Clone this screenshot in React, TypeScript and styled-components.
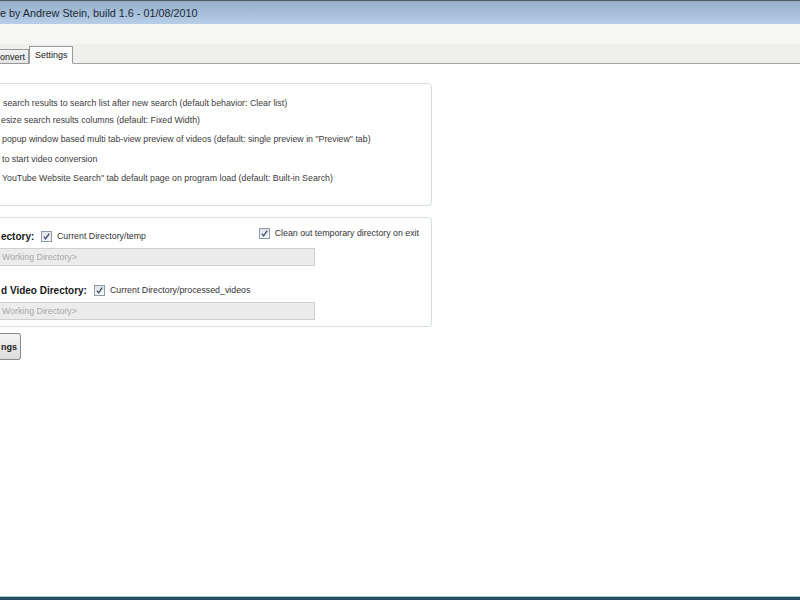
import React from "react";
import styled, { createGlobalStyle } from "styled-components";

const Global = createGlobalStyle`
  html, body { margin: 0; padding: 0; background: #fff; }
  body { width: 800px; height: 600px; overflow: hidden; }
`;

const Window = styled.div`
  width: 800px;
  height: 600px;
  display: flex;
  flex-direction: column;
  overflow: hidden;
  font-family: "Liberation Sans", "DejaVu Sans", sans-serif;
  background: #fff;
`;

const TitleBar = styled.div`
  height: 23px;
  border-top: 1px solid #4d5b66;
  background: linear-gradient(#96aec8, #a9c2dc 60%, #b7cfe8);
  display: flex;
  align-items: center;
  font-size: 10.8px;
  color: #1e2a36;
  white-space: nowrap;
`;

const MenuArea = styled.div`
  height: 20px;
  background: #f6f7f5;
`;

const TabStrip = styled.div`
  height: 19px;
  background: #efefed;
  border-bottom: 1px solid #a3a3a3;
  display: flex;
  align-items: flex-end;
`;

const Tab = styled.div<{ $active?: boolean }>`
  font-size: 9px;
  color: #222;
  padding: 0 4px;
  height: ${(p) => (p.$active ? 18 : 15)}px;
  line-height: ${(p) => (p.$active ? 16 : 15)}px;
  margin-bottom: -1px;
  background: ${(p) => (p.$active ? "#fcfcfc" : "linear-gradient(#f2f2f2,#e4e4e4)")};
  border: 1px solid #999;
  border-bottom: ${(p) => (p.$active ? "1px solid #fcfcfc" : "1px solid #999")};
  border-left: ${(p) => (p.$active ? "1px solid #999" : "none")};
  box-sizing: border-box;
  white-space: nowrap;
`;

const FirstTab = styled(Tab)`
  padding-left: 0;
  width: 29px;
`;

const SecondTab = styled(Tab)`
  width: 44px;
  padding-left: 5px;
`;

const Content = styled.div`
  flex: 1;
  display: flex;
  flex-direction: column;
  padding-top: 19px;
  gap: 11px;
`;

const Group = styled.div`
  width: 442px;
  margin-left: -10px;
  box-sizing: border-box;
  border: 1px solid #d6dde2;
  border-radius: 4px;
  background: #fff;
`;

const OptionsGroup = styled(Group)`
  height: 123px;
  padding: 13px 0 0 10px;
  display: flex;
  flex-direction: column;
`;

const OptionLine = styled.div<{ $indent: number; $gap: number }>`
  font-size: 8.8px;
  color: #3b3b3b;
  white-space: nowrap;
  padding-left: ${(p) => p.$indent}px;
  height: 12px;
  line-height: 12px;
  margin-bottom: ${(p) => p.$gap}px;
`;

const DirGroup = styled(Group)`
  height: 110px;
  padding: 11px 0 0 10px;
  display: flex;
  flex-direction: column;
`;

const DirRow = styled.div`
  display: flex;
  align-items: center;
  height: 14px;
`;

const Label = styled.span<{ $w: number }>`
  font-size: 10px;
  font-weight: bold;
  color: #1a1a1a;
  width: ${(p) => p.$w}px;
  white-space: nowrap;
`;

const CheckText = styled.span`
  font-size: 8.8px;
  color: #333;
  white-space: nowrap;
  margin-left: 5px;
`;

const Spacer = styled.div`
  flex: 1;
`;

const RightCheck = styled.div`
  display: flex;
  align-items: center;
  margin-right: 12px;
  margin-top: -6px;
`;

const PathBox = styled.div`
  width: 324px;
  height: 18px;
  margin-left: -10px;
  margin-top: 5px;
  padding-left: 10px;
  box-sizing: border-box;
  background: #ececec;
  border: 1px solid #cfcfcf;
  font-size: 8.8px;
  color: #a8a8a8;
  line-height: 16px;
  white-space: nowrap;
`;

const BoxGap = styled.div`
  height: 17px;
`;

const ButtonRow = styled.div`
  display: flex;
`;

const SaveButton = styled.div`
  width: 21px;
  height: 27px;
  box-sizing: border-box;
  border: 1px solid #8a8a8a;
  border-left: none;
  border-radius: 0 3px 3px 0;
  background: linear-gradient(#f4f4f4, #e8e8e8 50%, #dcdcdc);
  font-size: 9px;
  font-weight: bold;
  color: #222;
  display: flex;
  align-items: center;
  justify-content: flex-end;
  padding-right: 3px;
  margin-top: -5px;
`;

const BottomEdge = styled.div`
  height: 3px;
  border-top: 1px solid #a9c8d8;
  background: #234f5e;
`;

const Box = styled.span`
  display: inline-flex;
  width: 11px;
  height: 11px;
  flex: none;
  box-sizing: border-box;
  border: 1px solid #8e9aa8;
  background: linear-gradient(#dfe3e8, #f6f7f8);
  align-items: center;
  justify-content: center;
`;

const Check = () => (
  <Box>
    <svg width="9" height="9" viewBox="0 0 9 9">
      <path d="M1.8 4.6 L3.6 6.8 L7.2 1.6" fill="none" stroke="#3d4f73" strokeWidth="1.3" />
    </svg>
  </Box>
);

export default function App() {
  return (
    <>
      <Global />
      <Window>
        <TitleBar>e by Andrew Stein, build 1.6 - 01/08/2010</TitleBar>
        <MenuArea />
        <TabStrip>
          <FirstTab>onvert</FirstTab>
          <SecondTab $active>Settings</SecondTab>
        </TabStrip>
        <Content>
          <OptionsGroup>
            <OptionLine $indent={2} $gap={5}>search results to search list after new search (default behavior: Clear list)</OptionLine>
            <OptionLine $indent={0} $gap={7}>esize search results columns (default: Fixed Width)</OptionLine>
            <OptionLine $indent={1} $gap={8}>popup window based multi tab-view preview of videos (default: single preview in "Preview" tab)</OptionLine>
            <OptionLine $indent={1} $gap={7}>to start video conversion</OptionLine>
            <OptionLine $indent={1} $gap={0}>YouTube Website Search" tab default page on program load (default: Built-in Search)</OptionLine>
          </OptionsGroup>
          <DirGroup>
            <DirRow>
              <Label $w={40}>ectory:</Label>
              <Check />
              <CheckText>Current Directory/temp</CheckText>
              <Spacer />
              <RightCheck>
                <Check />
                <CheckText>Clean out temporary directory on exit</CheckText>
              </RightCheck>
            </DirRow>
            <PathBox>Working Directory&gt;</PathBox>
            <BoxGap />
            <DirRow>
              <Label $w={93}>d Video Directory:</Label>
              <Check />
              <CheckText>Current Directory/processed_videos</CheckText>
            </DirRow>
            <PathBox>Working Directory&gt;</PathBox>
          </DirGroup>
          <ButtonRow>
            <SaveButton>ngs</SaveButton>
          </ButtonRow>
        </Content>
        <BottomEdge />
      </Window>
    </>
  );
}
